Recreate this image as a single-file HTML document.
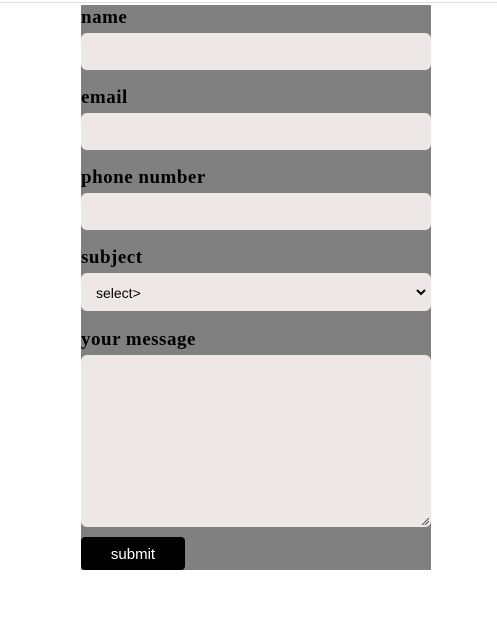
<!DOCTYPE html>
<html><head><style>
body{margin:0;width:497px;height:618px;background:#fff;position:relative;overflow:hidden}
.top{position:absolute;left:0;top:2px;width:497px;height:1px;background:#ddd}
.box{position:absolute;left:81px;top:5px;width:350px;height:565px;background:#808080}
.l{position:absolute;left:81px;font:bold 19px "Liberation Serif",serif;color:#000;line-height:22px;letter-spacing:0.5px}
.i{position:absolute;left:81px;width:350px;background:#ede7e7;border-radius:6px}
.sel{font:14px "Liberation Sans",sans-serif;color:#000}
.btn{position:absolute;left:81px;top:537px;width:104px;height:33px;background:#000;border-radius:4px;color:#fff;font:15px "Liberation Sans",sans-serif;text-align:center;line-height:35px}
</style></head><body>
<div class="top"></div>
<div class="box"></div>
<div class="l" style="top:7px">name</div>
<div class="i" style="top:33px;height:37px"></div>
<div class="l" style="top:87px">email</div>
<div class="i" style="top:113px;height:37px"></div>
<div class="l" style="top:167px">phone number</div>
<div class="i" style="top:193px;height:37px"></div>
<div class="l" style="top:247px">subject</div>
<div class="i sel" style="top:273px;height:38px"><span style="position:absolute;left:15px;top:12px">select&gt;</span>
<svg style="position:absolute;right:5px;top:15px" width="10" height="8" viewBox="0 0 10 8"><path d="M1 2 L5 6 L9 2" stroke="#000" stroke-width="2" fill="none"/></svg></div>
<div class="l" style="top:329px">your message</div>
<div class="i" style="top:355px;height:172px"><svg style="position:absolute;right:2px;bottom:2px" width="8" height="8"><path d="M1 8L8 1M4 8L8 4" stroke="#555" stroke-width="1"/></svg></div>
<div class="btn">submit</div>
</body></html>
